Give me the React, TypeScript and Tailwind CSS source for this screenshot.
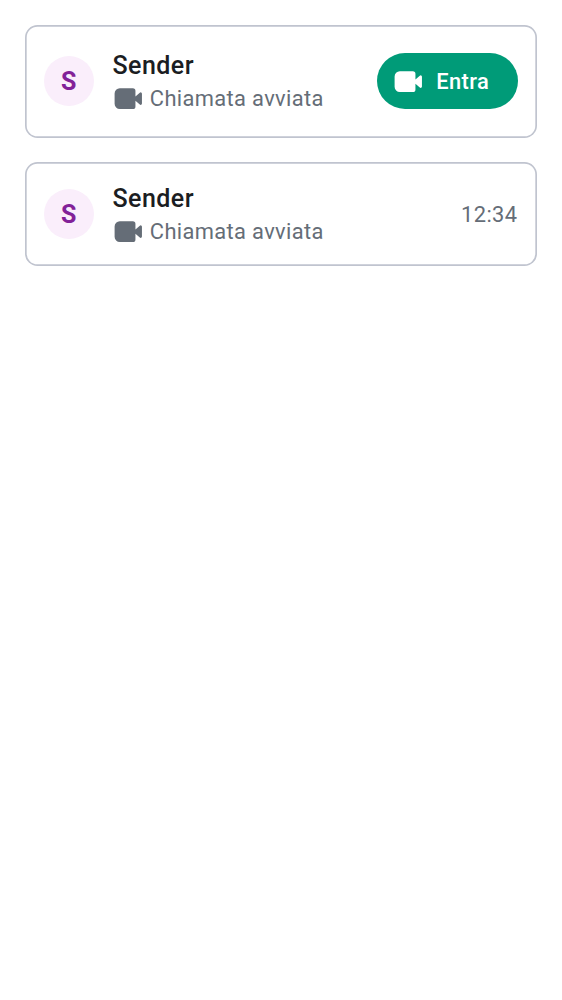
import React from "react";

function VideoIcon({ className }: { className: string }) {
  return (
    <svg viewBox="0 0 24 24" fill="currentColor" className={"size-[31.25px] shrink-0 " + className}>
      <path d="M6 4h10a2 2 0 0 1 2 2v4.286l3.35-2.871a1 1 0 0 1 1.65.76v7.65a1 1 0 0 1-1.65.76L18 13.714V18a2 2 0 0 1-2 2H6a4 4 0 0 1-4-4V8a4 4 0 0 1 4-4z" />
    </svg>
  );
}

function CallCard({ children }: { children: React.ReactNode }) {
  return (
    <section className="flex items-center rounded-[12.5px] p-[18.75px] shadow-[inset_0_0_0_1.7px_#c0c4cf]">
      <div className="flex size-[50px] shrink-0 items-center justify-center rounded-full bg-[#faeefb] pt-[1.3px] text-[25px] font-bold text-[#822198]">
        S
      </div>
      <div className="ml-[18.75px] flex-1">
        <div className="h-[34.375px] pt-px text-[25px] leading-[34.375px] font-medium tracking-[0.45px] text-[#1b1d22]">Sender</div>
        <div className="flex h-[31.25px] items-center text-[#656d77]">
          <VideoIcon className="-ml-[0.2px] text-[#656d77]" />
          <span className="ml-[6.25px] text-[21.875px] leading-[31.25px] tracking-[0.36px]">Chiamata avviata</span>
        </div>
      </div>
      {children}
    </section>
  );
}

export default function App() {
  return (
    <main className="flex min-h-screen flex-col gap-[24.9px] bg-white p-[25px] font-['Roboto',sans-serif]">
      <CallCard>
        <button className="my-[9.375px] flex h-[56.25px] w-[141.5px] items-center rounded-full bg-[#009b78] pl-[15.7px] text-white">
          <VideoIcon className="text-white" />
          <span className="ml-[12.5px] text-[21.875px] leading-[31.25px] font-medium tracking-[0.39px]">Entra</span>
        </button>
      </CallCard>
      <CallCard>
        <time className="pt-px pr-[0.8px] text-[21.875px] leading-[31.25px] tracking-[0.39px] text-[#656d77]">12:34</time>
      </CallCard>
    </main>
  );
}
